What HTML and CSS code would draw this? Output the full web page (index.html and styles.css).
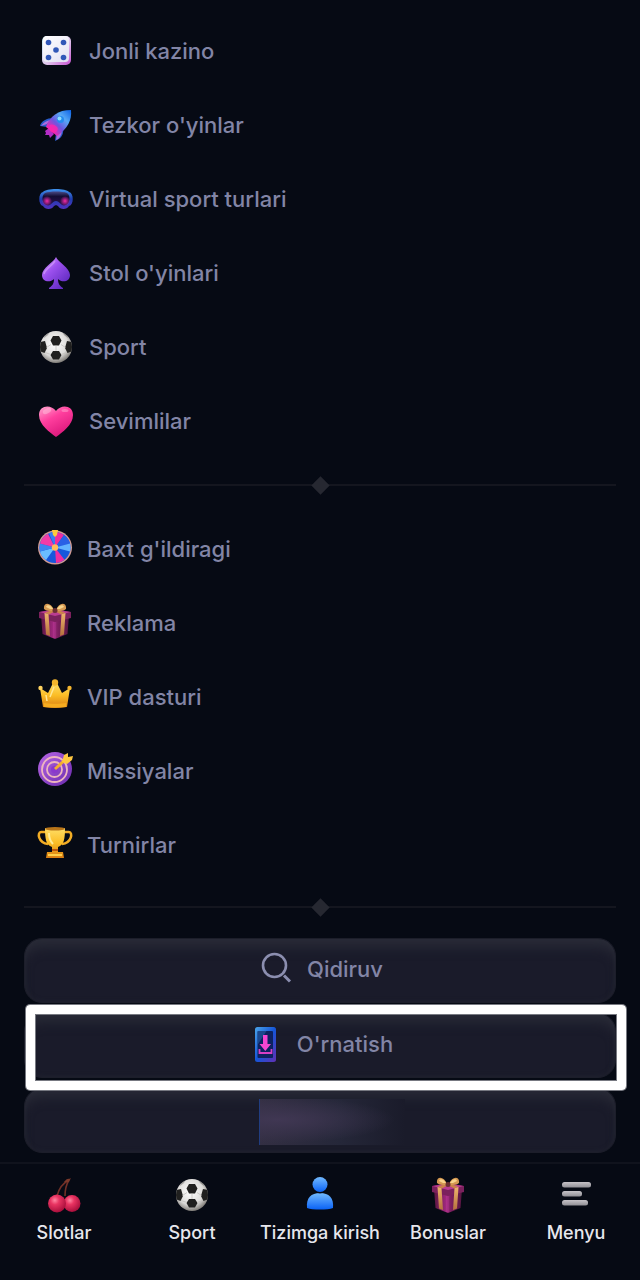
FILE: index.html
```html
<!DOCTYPE html>
<html lang="uz">
<head>
<meta charset="utf-8">
<meta name="viewport" content="width=device-width, initial-scale=1">
<title>Menyu</title>
<link rel="stylesheet" href="styles.css">
</head>
<body>
<svg class="sprite" aria-hidden="true">
  <defs>
    <radialGradient id="ballFill" cx=".45" cy=".4" r=".62"><stop offset="0" stop-color="#fff"/><stop offset=".65" stop-color="#dcdbd9"/><stop offset="1" stop-color="#77746f"/></radialGradient>
    <linearGradient id="gold" x2="0" y2="1"><stop offset="0" stop-color="#ffdf68"/><stop offset=".5" stop-color="#fbbd25"/><stop offset="1" stop-color="#d97d13"/></linearGradient>
    <linearGradient id="giftFill"><stop offset="0" stop-color="#59153f"/><stop offset=".45" stop-color="#a42a82"/><stop offset=".6" stop-color="#7d1f60"/><stop offset="1" stop-color="#561540"/></linearGradient>
    <linearGradient id="ribbon" x2="0" y2="1"><stop offset="0" stop-color="#eeb56c"/><stop offset="1" stop-color="#b5703e"/></linearGradient>
    <linearGradient id="rocketFill" x1="1" y1="0" x2="0" y2="1"><stop offset="0" stop-color="#0b62e8"/><stop offset=".3" stop-color="#56a7f5"/><stop offset=".55" stop-color="#6c56e0"/><stop offset=".8" stop-color="#f424b2"/></linearGradient>
    <linearGradient id="spadeFill" x2=".9" y2="1"><stop offset="0" stop-color="#dda5ff"/><stop offset=".4" stop-color="#9c50ee"/><stop offset="1" stop-color="#5524b8"/></linearGradient>
    <linearGradient id="heartFill" x1=".1" y1="0" x2=".7" y2="1"><stop offset="0" stop-color="#ff9ccb"/><stop offset=".4" stop-color="#ff3f9e"/><stop offset="1" stop-color="#d81478"/></linearGradient>
    <linearGradient id="visorFill" x2="0" y2="1"><stop offset="0" stop-color="#4a4a86"/><stop offset=".35" stop-color="#130d34"/><stop offset="1" stop-color="#2c1150"/></linearGradient>
    <linearGradient id="visorRim" x2="0" y2="1"><stop offset="0" stop-color="#3f93ef"/><stop offset=".5" stop-color="#1f3eaf"/><stop offset="1" stop-color="#5330c0"/></linearGradient>
    <radialGradient id="visorGlow"><stop offset="0" stop-color="#f02aa8"/><stop offset="1" stop-color="#f02aa8" stop-opacity="0"/></radialGradient>
    <linearGradient id="diceFill" x2=".8" y2="1"><stop offset="0" stop-color="#fff"/><stop offset="1" stop-color="#e4e2f4"/></linearGradient>
    <linearGradient id="diceEdge" x2="1" y2="1"><stop offset="0" stop-color="#c9f3f6"/><stop offset=".55" stop-color="#e1c8ed"/><stop offset="1" stop-color="#c64fd0"/></linearGradient>
    <radialGradient id="cherryFill" cx=".38" cy=".32" r=".7"><stop offset="0" stop-color="#ff86a2"/><stop offset=".35" stop-color="#e93462"/><stop offset="1" stop-color="#a70e3b"/></radialGradient>
    <linearGradient id="userFill" x2="0" y2="1"><stop offset="0" stop-color="#72baff"/><stop offset="1" stop-color="#0a62f5"/></linearGradient>
    <linearGradient id="targetFill" x2="1" y2="1"><stop offset="0" stop-color="#b767e5"/><stop offset="1" stop-color="#6929ad"/></linearGradient>
    <linearGradient id="phoneFill" x2="1" y2="1"><stop offset="0" stop-color="#4ba5e8"/><stop offset=".5" stop-color="#1555d8"/><stop offset="1" stop-color="#6130b4"/></linearGradient>
    <linearGradient id="barFill" x2="0" y2="1"><stop offset="0" stop-color="#c5c2c7"/><stop offset="1" stop-color="#919096"/></linearGradient>
    <clipPath id="ballClip"><circle cx="18" cy="18" r="16"/></clipPath>
  </defs>
  <symbol id="ball" viewBox="0 0 36 36">
    <circle cx="18" cy="18" r="16" fill="url(#ballFill)"/>
    <g clip-path="url(#ballClip)" fill="#20201f">
      <path d="M15 7h6l2.500 4.500-2.500 5h-6l-2.500-5z"/>
      <path d="M15 22h6l2.500 4-2.500 4.500h-6l-2.500-4.500z"/>
      <path d="M2 13l5-1 2 7-2.500 5-5-2z"/><path d="M34 13l-5-1-2 7 2.500 5 5-2z"/>
      <path d="M7 5l5-3-2 4-4 3zM29 5l-5-3 2 4 4 3z" opacity=".3"/>
    </g>
    <path d="M18 16.500V22M13 15.500l-4.500 3M23 15.500l4.500 3M7 23.500l6 2M29 23.500l-6 2" fill="none" stroke="#c4c2be" stroke-width=".8"/>
  </symbol>
  <symbol id="gift" viewBox="0 0 36 36">
    <path d="M4 12l14 3 14-3-1.500 19L18 36 5.500 31z" fill="url(#giftFill)"/>
    <path d="M2 9l16-3 16 3v6l-16 4-16-4z" fill="#7b215d"/>
    <path d="M2.500 9L18 6.500 33.500 9 18 13z" fill="#ba3c92"/>
    <path d="M7.500 10l4 1 1.500 22-4-1.500zM28.500 10l-4 1L23 33l4-1.500z" fill="url(#ribbon)"/>
    <path d="M8 9.500l9-3 2 1-7 4zM28 9.500l-9-3-2 1 7 4z" fill="#cb8249"/>
    <path d="M17 7C14-1 6-1 7 6c2 2 6 2 10 2zM19 7c3-8 11-8 10-1-2 2-6 2-10 2z" fill="#d69a52"/>
    <path d="M16 6c-2-4-6-5-7-2l4 2zM20 6c2-4 6-5 7-2l-4 2z" fill="#f7d38b"/>
    <circle cx="18" cy="7.500" r="2.500" fill="#6b2e31"/>
    <path d="M16 19h3v16h-3z" fill="#d14aaa" opacity=".2"/>
  </symbol>
</svg>

<main class="menu">
  <nav class="group">
    <a class="item" href="#"><svg class="icon" viewBox="0 0 36 36"><rect x="4" y="3" width="29" height="29" rx="5" fill="url(#diceEdge)"/><rect x="5" y="3" width="26" height="26" rx="4" fill="url(#diceFill)"/><g fill="#3157b8"><circle cx="10.500" cy="9.500" r="2.800"/><circle cx="25.500" cy="9.500" r="2.800"/><circle cx="18" cy="17" r="2.800"/><circle cx="10.500" cy="24.500" r="2.800"/><circle cx="25.500" cy="24.500" r="2.800"/></g></svg>Jonli kazino</a>
    <a class="item" href="#"><svg class="icon" viewBox="0 0 36 36"><path d="M15 11C9 11 3 14 2 19l7 1zM25 22c1 5-2 10-8 12l1-8z" fill="#275bc9"/><path d="M12 13c-4 1-7 3-9 6l6-2zM24 25c-1 4-3 7-6 8l1-6z" fill="#ae6cdf"/><path d="M11 21l-4 3 1 2-1 2 4 0 1 3 4-4z" fill="#b52cc8"/><path d="M33 3c1 10-3 18-14 26l-11-9C12 9 20 3 33 3z" fill="url(#rocketFill)"/><path d="M12 18c-2 3-1 7 4 8 3-1 5-4 3-6-2-2-4-3-7-2z" fill="#ff24ae" opacity=".8"/><circle cx="22.500" cy="12.500" r="3.500" fill="#238bf0"/><circle cx="21.500" cy="11.500" r="2" fill="#8bdcff"/></svg>Tezkor o'yinlar</a>
    <a class="item" href="#"><svg class="icon" viewBox="0 0 36 36"><path d="M5 11C8 7 28 7 31 11c5 1 5 13 0 14-2 4-9 4-11 0l-2-1-2 1c-2 4-9 4-11 0-5-1-5-13 0-14z" fill="url(#visorRim)"/><path d="M7 12c5-2 17-2 22 0 4 3 3 10-1 12-5 2-6-4-10-4s-5 6-10 4c-4-2-5-9-1-12z" fill="url(#visorFill)"/><circle cx="9" cy="20" r="5" fill="url(#visorGlow)"/><circle cx="27" cy="20" r="5" fill="url(#visorGlow)"/></svg>Virtual sport turlari</a>
    <a class="item" href="#"><svg class="icon" viewBox="0 0 36 36"><path d="M18 2c2 5 14 11 14 18 0 7-8 8-12 4 0 5 2 7 5 9v1H11v-1c3-2 5-4 5-9-4 4-12 3-12-4C4 13 16 7 18 2z" fill="url(#spadeFill)"/><path d="M17 6C14 11 7 14 6 19" fill="none" stroke="#e2afff" stroke-width="1.500" opacity=".5"/></svg>Stol o'yinlari</a>
    <a class="item" href="#"><svg class="icon"><use href="#ball"/></svg>Sport</a>
    <a class="item" href="#"><svg class="icon" viewBox="0 0 36 36"><path d="M18 34C12 29.500 1 22 1 12 1 2 13 1 18 8c5-7 17-6 17 4 0 10-11 17.500-17 22z" fill="url(#heartFill)"/><ellipse cx="9" cy="8" rx="4.500" ry="2.500" fill="#ffc0dc" opacity=".5" transform="rotate(-25 9 8)"/><ellipse cx="27" cy="7.500" rx="3.500" ry="1.600" fill="#ffb2d5" opacity=".45"/></svg>Sevimlilar</a>
  </nav>
  <div class="divider"></div>
  <nav class="group group-extra">
    <a class="item" href="#"><svg class="icon" viewBox="0 0 36 36"><circle cx="18" cy="18.500" r="17" fill="#d19b95"/><g transform="translate(18 18.500)"><circle r="15.500" fill="#1857dc"/><path d="M0 0L-6-14.300A15.500 15.500 0 0 1 0-15.500z" fill="#3a7df2"/><path d="M0 0V-15.500A15.500 15.500 0 0 1 9-12.600z" fill="#ee2da0"/><path d="M0 0L9-12.600A15.500 15.500 0 0 1 15-4z" fill="#2961e5"/><path d="M0 0L15-4A15.500 15.500 0 0 1 15 4z" fill="#63b4ff"/><path d="M0 0L9.500 12.200A15.500 15.500 0 0 1 1 15.500z" fill="#ef2da1"/><path d="M0 0L-9 12.600A15.500 15.500 0 0 1-15 4z" fill="#6abcff"/><path d="M0 0L-15 4A15.500 15.500 0 0 1-15-4z" fill="#3d83f0"/><path d="M0 0L-15-4A15.500 15.500 0 0 1-7-13.800z" fill="#f23ba7"/><circle r="3.200" fill="#ffbc58"/></g><path d="M15 1h6l-1 5-2 2-2-2z" fill="#ffca3b"/></svg>Baxt g'ildiragi</a>
    <a class="item" href="#"><svg class="icon"><use href="#gift"/></svg>Reklama</a>
    <a class="item" href="#"><svg class="icon" viewBox="0 0 36 36"><path d="M3 11l8 5 5-10h4l5 10 8-5-3 19c-6 1-18 1-24 0z" fill="url(#gold)"/><path d="M6.500 26c7 1 16 1 23 0l-.5 4c-7 1-15 1-22 0z" fill="#f6ac20"/><circle cx="18" cy="5.500" r="3.200" fill="#f5b62d"/><circle cx="3.500" cy="11" r="2.200" fill="#ffd461"/><circle cx="32.500" cy="11" r="2.200" fill="#f4b52f"/><path d="M17 10l-4 10M9 18l1 6" stroke="#ffe795" stroke-width="1.500"/></svg>VIP dasturi</a>
    <a class="item" href="#"><svg class="icon" viewBox="0 0 36 36"><circle cx="18" cy="18" r="17" fill="url(#targetFill)"/><g fill="none" stroke="#edb5bf" stroke-width="1.800"><circle cx="17.500" cy="18.500" r="12.500"/><circle cx="17.500" cy="18.500" r="7.500"/></g><circle cx="17.500" cy="18.500" r="3.500" fill="#8a38cd"/><path d="M18 18L29 8" stroke="#f4ad31" stroke-width="3"/><path d="M25 11l2-7 4-2v4l5-1-1 4-5 4z" fill="#ffc842"/></svg>Missiyalar</a>
    <a class="item" href="#"><svg class="icon" viewBox="0 0 36 36"><path d="M9 7H4c-4 0-3 11 7 12M27 7h5c4 0 3 11-7 12" fill="none" stroke="#f1ac25" stroke-width="2.500"/><path d="M8 3h20c0 11-1 17-7 19v5h5l1 6H9l1-6h5v-5C9 20 8 14 8 3z" fill="url(#gold)"/><ellipse cx="18" cy="3.800" rx="10" ry="1.800" fill="#b87519"/><path d="M12 8c0 6 2 9 4 11" fill="none" stroke="#ffeb96" stroke-width="2"/><path d="M15 25h6" stroke="#b9550d" stroke-width="2"/><path d="M11 30h14" stroke="#ffcf4a" stroke-width="2"/></svg>Turnirlar</a>
  </nav>
  <div class="divider"></div>
  <div class="actions">
    <button class="action" type="button"><svg class="icon raised" viewBox="0 0 36 36" fill="none" stroke="#8b8eaf" stroke-width="2.600"><circle cx="17.500" cy="16.500" r="11.500"/><path d="M27 26.500l6 6" stroke-width="3"/></svg>Qidiruv</button>
    <div class="spotlight"><button class="action" type="button"><svg class="icon" viewBox="0 0 36 36"><rect x="8" y="1" width="21" height="35" rx="2.500" fill="url(#phoneFill)"/><rect x="10.500" y="5" width="15.500" height="27" rx="1" fill="#0d2260"/><path d="M10.500 5h9l-9 14z" fill="#2561aa" opacity=".6"/><path d="M16 9h4.500v9h3.500l-5.700 7-5.800-7H16z" fill="#f545d1"/><path d="M12.500 23v4h12v-4" fill="none" stroke="#d640c5" stroke-width="1.800"/></svg>O'rnatish</button></div>
    <button class="action" type="button"><span class="smudge"></span></button>
  </div>
</main>

<nav class="tabs">
  <a class="tab" href="#"><svg class="icon" viewBox="0 0 36 36"><path d="M11 19c2-8 6-13 12-16-3 5-4 9-4 16" fill="none" stroke="#713027" stroke-width="1.600"/><path d="M18 5c2-3 4-4 6-3l-1 3z" fill="#7b392b"/><circle cx="26" cy="26.500" r="8.500" fill="url(#cherryFill)"/><circle cx="11" cy="26.500" r="9" fill="url(#cherryFill)"/></svg>Slotlar</a>
  <a class="tab" href="#"><svg class="icon"><use href="#ball"/></svg>Sport</a>
  <a class="tab" href="#"><svg class="icon" viewBox="0 0 36 36"><path d="M5 31c-1-10 4-15 13-15s14 5 13 15c-5 2-21 2-26 0z" fill="url(#userFill)"/><circle cx="18" cy="8" r="8.500" fill="#060a14"/><circle cx="18" cy="7.500" r="7.500" fill="url(#userFill)"/></svg>Tizimga kirish</a>
  <a class="tab" href="#"><svg class="icon"><use href="#gift"/></svg>Bonuslar</a>
  <a class="tab" href="#"><svg class="icon" viewBox="0 0 36 36" fill="url(#barFill)"><rect x="4" y="5" width="29" height="5.500" rx="2.500"/><rect x="4" y="14" width="20" height="5.500" rx="2.500"/><rect x="4" y="23" width="26" height="5.500" rx="2.500"/></svg>Menyu</a>
</nav>
</body>
</html>
```
FILE: styles.css
```css
* { box-sizing: border-box; }
body {
  margin: 0;
  min-height: 100vh;
  display: flex;
  flex-direction: column;
  background: #060a14;
  color: #8285a6;
  font-family: Inter, "Liberation Sans", sans-serif;
  font-size: 22px;
  font-weight: 500;
  line-height: 28px;
}
a { color: inherit; text-decoration: none; }
.sprite { position: absolute; width: 0; height: 0; }
.icon { width: 36px; height: 36px; flex: none; }
.menu { flex: 1; padding: 14px 24px 9px; }
.group { display: flex; flex-direction: column; padding: 0 14px; }
.item { display: flex; align-items: center; gap: 15px; height: 74px; }
.group-extra .item { gap: 14px; }
.group-extra .icon { margin: 0 0 4px -1px; }
.divider {
  display: flex;
  align-items: center;
  justify-content: center;
  height: 54px;
  background: linear-gradient(#14161f, #14161f) center / 100% 2px no-repeat;
}
.divider::before {
  content: "";
  width: 13px;
  height: 13px;
  background: #262831;
  transform: rotate(45deg);
}
.group-extra + .divider { height: 50px; }
.actions { display: flex; flex-direction: column; gap: 10px; margin-top: 6px; }
.action {
  display: flex;
  align-items: center;
  justify-content: center;
  gap: 14px;
  width: 100%;
  height: 65px;
  padding: 0 0 4px;
  border: 1px solid #1c1e2a;
  border-radius: 18px;
  background: #1a1b2a;
  box-shadow: inset 0 12px 12px -4px #292b37, inset 0 0 5px #222430;
  color: inherit;
  font: inherit;
}
.raised { margin-bottom: 4px; }
.spotlight { position: relative; }
.spotlight::after {
  content: "";
  position: absolute;
  inset: -8px -10px -12px 2px;
  border: 9px solid #fff;
  border-radius: 4px;
  box-shadow: 0 0 0 1px #777981, inset 0 0 0 1px #777981;
  z-index: 1;
  pointer-events: none;
}
.smudge {
  width: 145px;
  height: 46px;
  margin: 6px 0 0 25px;
  background: radial-gradient(ellipse at 12% 45%, #403753, transparent 65%), linear-gradient(90deg, #332f43, #252739 55%, #1a1b2a);
  box-shadow: -1px 0 #213d80;
}
.tabs {
  display: grid;
  grid-template-columns: repeat(5, 1fr);
  height: 118px;
  padding-top: 13px;
  border-top: 2px solid #10131d;
  color: #e7e7ed;
  font-size: 18px;
  line-height: 24px;
}
.tab { display: flex; flex-direction: column; align-items: center; gap: 8px; white-space: nowrap; }
```
